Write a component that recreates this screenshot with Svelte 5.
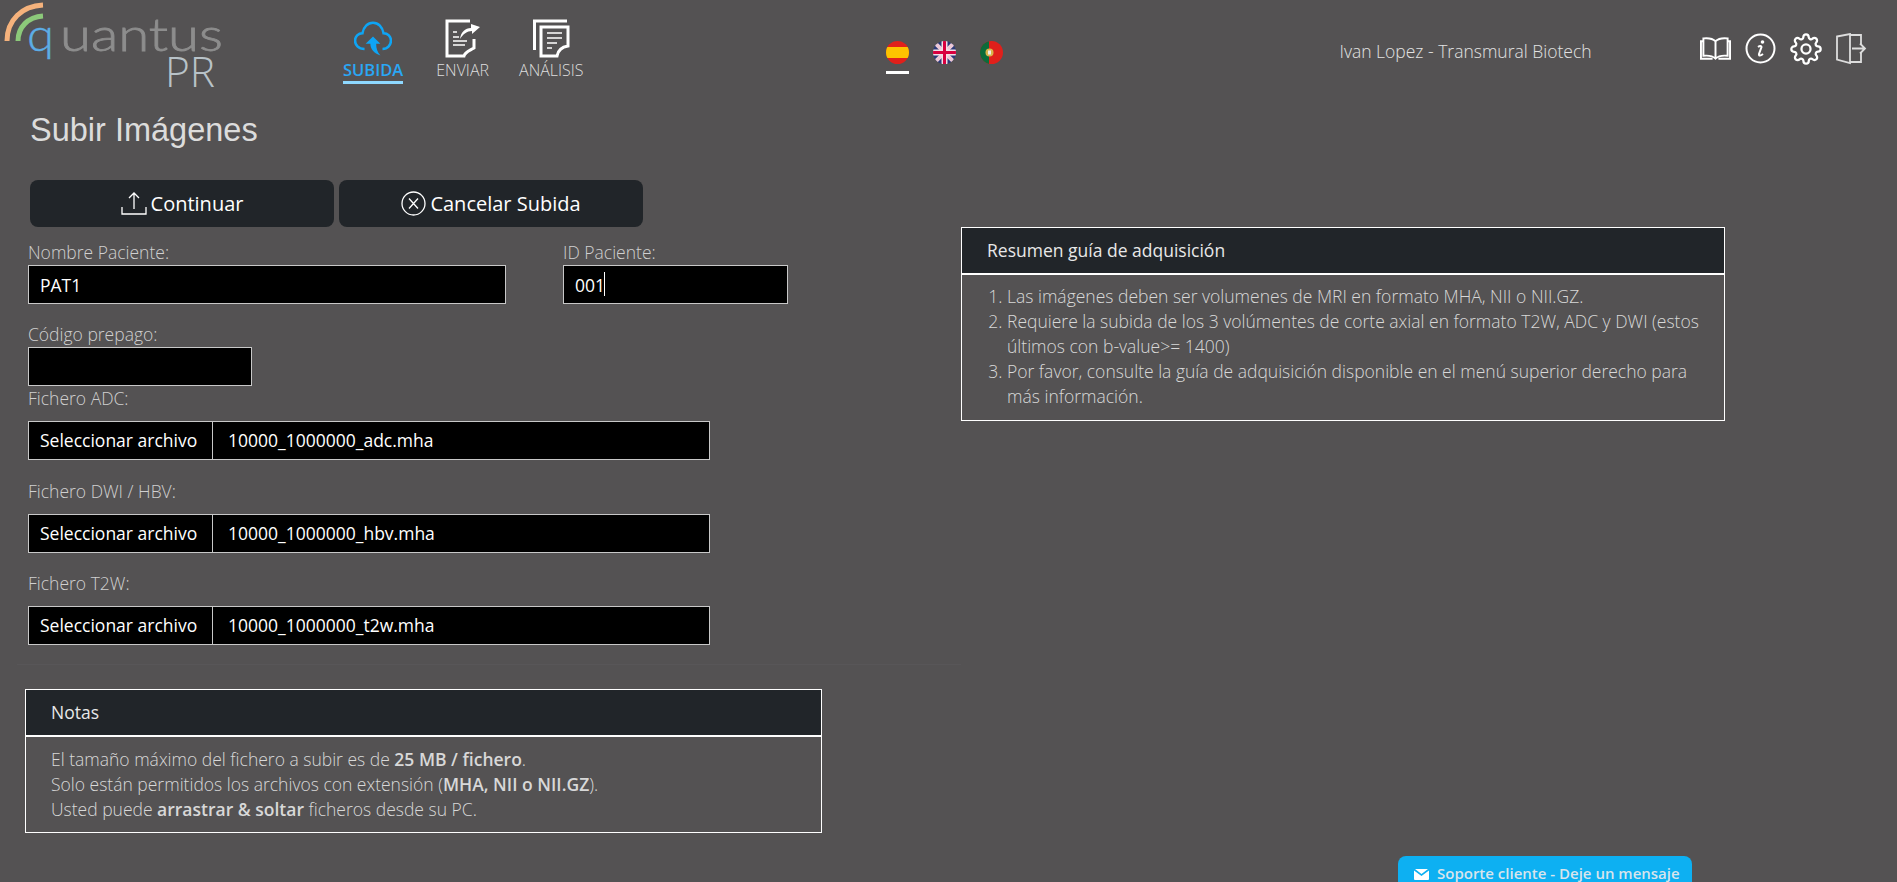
<script>
    let fileFields = [
        { label: 'Fichero ADC:', name: '10000_1000000_adc.mha', cls: 'adc' },
        { label: 'Fichero DWI / HBV:', name: '10000_1000000_hbv.mha', cls: 'hbv' },
        { label: 'Fichero T2W:', name: '10000_1000000_t2w.mha', cls: 't2w' }
    ];
    const gear = "M19.4 15a1.65 1.65 0 0 0 .33 1.82l.06.06a2 2 0 0 1 0 2.83 2 2 0 0 1-2.83 0l-.06-.06a1.65 1.65 0 0 0-1.82-.33 1.65 1.65 0 0 0-1 1.51V21a2 2 0 0 1-2 2 2 2 0 0 1-2-2v-.09A1.65 1.65 0 0 0 9 19.4a1.65 1.65 0 0 0-1.82.33l-.06.06a2 2 0 0 1-2.83 0 2 2 0 0 1 0-2.83l.06-.06a1.65 1.65 0 0 0 .33-1.82 1.65 1.65 0 0 0-1.51-1H3a2 2 0 0 1-2-2 2 2 0 0 1 2-2h.09A1.65 1.65 0 0 0 4.6 9a1.65 1.65 0 0 0-.33-1.82l-.06-.06a2 2 0 0 1 0-2.83 2 2 0 0 1 2.83 0l.06.06a1.65 1.65 0 0 0 1.82.33H9a1.65 1.65 0 0 0 1-1.51V3a2 2 0 0 1 2-2 2 2 0 0 1 2 2v.09a1.65 1.65 0 0 0 1 1.51 1.65 1.65 0 0 0 1.82-.33l.06-.06a2 2 0 0 1 2.83 0 2 2 0 0 1 0 2.83l-.06.06a1.65 1.65 0 0 0-.33 1.82V9a1.65 1.65 0 0 0 1.51 1H21a2 2 0 0 1 2 2 2 2 0 0 1-2 2h-.09a1.65 1.65 0 0 0-1.51 1z";
</script>

<div class="page">
    <header class="topbar">
        <svg class="logo" width="230" height="90" viewBox="0 0 230 90">
            <path d="M7 41 C7 20 22 6 43 5" fill="none" stroke="#f5b27c" stroke-width="5"/>
            <path d="M18 41 C18 27 28 17 43 16" fill="none" stroke="#8cc97a" stroke-width="5"/>
            <text class="logo-q" x="27" y="51" textLength="27" lengthAdjust="spacingAndGlyphs">q</text>
            <text class="logo-rest" x="60" y="51" textLength="163" lengthAdjust="spacingAndGlyphs">uantus</text>
            <text class="logo-pr" x="165" y="87" textLength="50" lengthAdjust="spacingAndGlyphs">PR</text>
        </svg>

        <nav class="mainnav">
            <div class="navitem active">
                <svg width="38" height="34" viewBox="0 0 36 32">
                    <path d="M10 26 C4 26 1 22 1 18 C1 14 4 11 8 11 C9 5 13 1 18 1 C23 1 27 5 28 11 C32 11 35 14 35 18 C35 22 32 26 27 26" fill="none" stroke="#0ea5f5" stroke-width="2.4"/>
                    <path d="M18 14 L25 21 L21 21 C21 25 22 29 25 32 C19 30 15.500 26 15.500 21 L11 21 Z" fill="#0ea5f5"/>
                </svg>
                <span>SUBIDA</span>
            </div>
            <div class="navitem enviar">
                <svg width="35" height="39" viewBox="0 0 35 39">
                    <path d="M25 2 H2 V37 H19 C20 33 24 32 29 29 V20" fill="none" stroke="#fff" stroke-width="3"/>
                    <path d="M15 20 C16 13 20 9 26 9 V5 L35 8 L27 15 V12 C22 12 18 15 15 20 Z" fill="#fff"/>
                    <path d="M8 13 H12 M8 18 H14 M8 22 H22 M8 26 H20" fill="none" stroke="#fff" stroke-width="1.400"/>
                </svg>
                <span>ENVIAR</span>
            </div>
            <div class="navitem analisis">
                <svg width="37" height="39" viewBox="0 0 37 39">
                    <path d="M1.500 31 V2 H34" fill="none" stroke="#fff" stroke-width="3"/>
                    <path d="M8 8 H35 V27 C29 28 25 31 24 37 H8 Z" fill="none" stroke="#fff" stroke-width="3"/>
                    <path d="M14 14 H29 M14 19 H29 M14 24 H24 M14 29 H19" fill="none" stroke="#fff" stroke-width="1.400"/>
                </svg>
                <span>ANÁLISIS</span>
            </div>
        </nav>

        <div class="flags">
            <div class="flag selected">
                <svg width="23" height="23" viewBox="0 0 23 23">
                    <clipPath id="esclip"><circle cx="11.500" cy="11.500" r="11.500"/></clipPath>
                    <g clip-path="url(#esclip)">
                        <rect width="23" height="23" fill="#e0201b"/>
                        <rect x="0" y="6" width="23" height="11" fill="#fdc300"/>
                    </g>
                </svg>
            </div>
            <div class="flag">
                <svg width="23" height="23" viewBox="0 0 23 23">
                    <clipPath id="ukclip"><circle cx="11.500" cy="11.500" r="11.500"/></clipPath>
                    <g clip-path="url(#ukclip)">
                        <rect width="23" height="23" fill="#2a3a78"/>
                        <path d="M0 0 L23 23 M23 0 L0 23" stroke="#ecc8d6" stroke-width="4"/>
                        <path d="M11.500 0 V23 M0 11.500 H23" stroke="#f2dfe6" stroke-width="6"/>
                        <path d="M11.500 0 V23 M0 11.500 H23" stroke="#d8003f" stroke-width="3"/>
                    </g>
                </svg>
            </div>
            <div class="flag">
                <svg width="23" height="23" viewBox="0 0 23 23">
                    <clipPath id="ptclip"><circle cx="11.500" cy="11.500" r="11.500"/></clipPath>
                    <g clip-path="url(#ptclip)">
                        <rect width="23" height="23" fill="#e0201b"/>
                        <rect width="9" height="23" fill="#0c6b3a"/>
                        <circle cx="9.500" cy="11.500" r="4" fill="#d9b44a"/>
                        <rect x="8" y="9.500" width="3" height="4" fill="#eee"/>
                    </g>
                </svg>
            </div>
        </div>

        <div class="username">Ivan Lopez - Transmural Biotech</div>

        <div class="tools">
            <svg width="31" height="26" viewBox="0 0 32 26">
                <path d="M16 5 C13 2 8 1.500 3.500 2 V20 C8 19.500 13 20 16 23 C19 20 24 19.500 28.500 20 V2 C24 1.500 19 2 16 5 Z M16 5 V23" fill="none" stroke="#fff" stroke-width="2"/>
                <path d="M3.500 5 H1 V23 H13 M28.500 5 H31 V23 H19" fill="none" stroke="#fff" stroke-width="2"/>
            </svg>
            <svg width="31" height="31" viewBox="0 0 31 31">
                <circle cx="15.500" cy="15.500" r="14" fill="none" stroke="#fff" stroke-width="2"/>
                <circle cx="17.500" cy="9" r="1.800" fill="#fff"/>
                <path d="M13 14 C14.500 13 16.500 12.500 16.500 14 L14 21 C13.600 23 15.500 23 18 21" fill="none" stroke="#fff" stroke-width="2"/>
            </svg>
            <svg width="32" height="32" viewBox="0 0 24 24">
                <path d={gear} fill="none" stroke="#fff" stroke-width="1.700"/>
                <circle cx="12" cy="12" r="3.400" fill="none" stroke="#fff" stroke-width="1.700"/>
            </svg>
            <svg width="31" height="32" viewBox="0 0 31 32">
                <path d="M1 3.500 L14 1 V30 L1 26.500 Z" fill="none" stroke="#ddd" stroke-width="1.800"/>
                <path d="M14 2 H25 V11 M25 20 V29 H14" fill="none" stroke="#ddd" stroke-width="1.800"/>
                <path d="M16 15.500 H29 M24 10.500 L29 15.500 L24 20.500" fill="none" stroke="#ddd" stroke-width="1.800"/>
            </svg>
        </div>
    </header>

    <main class="content">
        <section class="left">
            <h1>Subir Imágenes</h1>

            <div class="actions">
                <button type="button">
                    <svg width="26" height="25" viewBox="0 0 26 25">
                        <path d="M13 2 V18 M8 7 L13 2 L18 7 M1 16 V23 H25 V16" fill="none" stroke="#fff" stroke-width="1.300"/>
                    </svg>
                    Continuar
                </button>
                <button type="button">
                    <svg width="25" height="25" viewBox="0 0 25 25">
                        <circle cx="12.500" cy="12.500" r="11.500" fill="none" stroke="#fff" stroke-width="1.300"/>
                        <path d="M8 7.500 L17 17.500 M17 7.500 L8 17.500" fill="none" stroke="#fff" stroke-width="1.300"/>
                    </svg>
                    Cancelar Subida
                </button>
            </div>

            <div class="form">
                <div class="row">
                    <div class="field name">
                        <label for="pname">Nombre Paciente:</label>
                        <input id="pname" value="PAT1" />
                    </div>
                    <div class="field pid">
                        <label for="pid">ID Paciente:</label>
                        <div class="caretwrap">
                            <input id="pid" value="001" />
                            <span class="caret"></span>
                        </div>
                    </div>
                </div>
                <div class="field code">
                    <label for="pcode">Código prepago:</label>
                    <input id="pcode" value="" />
                </div>
                {#each fileFields as f}
                    <div class="filegroup {f.cls}">
                        <div class="filelabel">{f.label}</div>
                        <div class="fileinput">
                            <span class="filebtn">Seleccionar archivo</span>
                            <span class="filename">{f.name}</span>
                        </div>
                    </div>
                {/each}
            </div>

            <hr />

            <div class="panel notes">
                <div class="panel-head">Notas</div>
                <div class="panel-body">
                    El tamaño máximo del fichero a subir es de <b>25 MB / fichero</b>.<br />
                    Solo están permitidos los archivos con extensión (<b>MHA, NII o NII.GZ</b>).<br />
                    Usted puede <b>arrastrar &amp; soltar</b> ficheros desde su PC.
                </div>
            </div>
        </section>

        <aside class="panel guide">
            <div class="panel-head">Resumen guía de adquisición</div>
            <ol class="panel-body">
                <li>Las imágenes deben ser volumenes de MRI en formato MHA, NII o NII.GZ.</li>
                <li>Requiere la subida de los 3 volúmentes de corte axial en formato T2W, ADC y DWI (estos últimos con b-value&gt;= 1400)</li>
                <li>Por favor, consulte la guía de adquisición disponible en el menú superior derecho para más información.</li>
            </ol>
        </aside>
    </main>

    <div class="support">
        <svg width="15" height="11" viewBox="0 0 15 11">
            <path d="M1 0 H14 L7.500 5 Z M0 1.500 L7.500 7 L15 1.500 V10 a1 1 0 0 1 -1 1 H1 a1 1 0 0 1 -1 -1 Z" fill="#fff"/>
        </svg>
        Soporte cliente - Deje un mensaje
    </div>
</div>

<style>
    :global(body) {
        margin: 0;
        background: #545253;
    }
    .page {
        height: 882px;
        overflow: hidden;
        position: relative;
        font-family: "Open Sans", "Liberation Sans", sans-serif;
        font-size: 17.5px;
        font-weight: 300;
        line-height: 25px;
        color: #e2e2e2;
    }
    .topbar {
        display: flex;
        height: 90px;
    }
    .logo {
        flex: none;
        overflow: visible;
    }
    .logo-q {
        font-family: Lato, sans-serif;
        font-weight: 300;
        font-size: 46px;
        fill: #5cade6;
        stroke: #5cade6;
        stroke-width: 0.4;
    }
    .logo-rest {
        font-family: Lato, sans-serif;
        font-weight: 300;
        font-size: 46px;
        fill: #8d8d8d;
        stroke: #8d8d8d;
        stroke-width: 0.8;
    }
    .logo-pr {
        font-family: "Open Sans", sans-serif;
        font-weight: 300;
        font-size: 42px;
        fill: #b8c2c8;
    }
    .mainnav {
        display: flex;
        margin-left: 113px;
        gap: 30px;
        padding-top: 19px;
    }
    .navitem {
        display: flex;
        flex-direction: column;
        align-items: center;
        font-size: 16px;
        height: 62px;
        line-height: 20px;
        color: #dddddd;
    }
    .navitem svg {
        height: 39px;
        margin-bottom: 2px;
    }
    .navitem.active {
        font-size: 16.5px;
        font-weight: 600;
        color: #2aa7f5;
        border-bottom: 3px solid #8ed8ff;
    }
    .enviar {
        margin-left: 3px;
    }
    .flags {
        display: flex;
        gap: 24px;
        margin-left: 302px;
        padding-top: 41px;
    }
    .flag {
        width: 23px;
        height: 30px;
    }
    .flag svg {
        display: block;
    }
    .flag.selected {
        border-bottom: 3px solid #fff;
    }
    .username {
        margin-left: 337px;
        padding-top: 39px;
        width: 250px;
        white-space: nowrap;
    }
    .tools {
        display: flex;
        align-items: center;
        gap: 14px;
        height: 63px;
        padding-top: 17px;
        margin-left: 110px;
    }
    .tools svg {
        flex: none;
    }
    .content {
        display: flex;
    }
    .left {
        width: 961px;
        flex: none;
    }
    h1 {
        margin: 0;
        padding-left: 30px;
        font-family: "Liberation Sans", Arial, sans-serif;
        font-size: 32.5px;
        font-weight: 400;
        line-height: 40px;
        color: #dcdcdc;
        height: 90px;
        padding-top: 20px;
        box-sizing: border-box;
    }
    .actions {
        display: flex;
        gap: 5px;
        padding-left: 30px;
    }
    .actions button {
        width: 304px;
        height: 47px;
        display: flex;
        align-items: center;
        justify-content: center;
        gap: 4px;
        background: #212529;
        border: 0;
        border-radius: 8px;
        color: #fff;
        font-family: "Open Sans", sans-serif;
        font-size: 20px;
        font-weight: 400;
    }
    .form {
        padding-left: 28px;
        padding-top: 13px;
    }
    .row {
        display: flex;
        gap: 57px;
    }
    .field label {
        display: block;
        line-height: 25px;
        color: #d0d0d0;
    }
    .field input {
        display: block;
        width: 100%;
        height: 39px;
        box-sizing: border-box;
        padding: 0 11px;
        background: #000;
        border: 1px solid #c8c8c8;
        border-radius: 0;
        color: #fff;
        font-family: "Open Sans", sans-serif;
        font-size: 17.5px;
        font-weight: 400;
        outline: none;
    }
    .name {
        width: 478px;
    }
    .pid {
        width: 225px;
    }
    .caretwrap {
        position: relative;
    }
    .caret {
        position: absolute;
        left: 41px;
        top: 7px;
        width: 1px;
        height: 24px;
        background: #fff;
    }
    .code {
        width: 224px;
        margin-top: 18px;
    }
    .filegroup {
        margin-bottom: 18.5px;
    }
    .filelabel {
        line-height: 25px;
        color: #d0d0d0;
        margin-bottom: 10px;
    }
    .fileinput {
        display: flex;
        width: 682px;
        height: 39px;
        box-sizing: border-box;
        background: #000;
        border: 1px solid #c8c8c8;
        color: #fff;
        font-weight: 400;
        line-height: 37px;
    }
    .filebtn {
        width: 184px;
        box-sizing: border-box;
        padding-left: 11px;
        border-right: 1px solid #c8c8c8;
        white-space: nowrap;
    }
    .filename {
        padding-left: 15px;
    }
    hr {
        margin: 17.5px 0 0 17px;
        border: 0;
        border-top: 1px solid #585658;
    }
    .panel {
        box-sizing: border-box;
        border: 1px solid #fff;
    }
    .panel-head {
        background: #212529;
        color: #e8e8e8;
        font-weight: 400;
        height: 47px;
        line-height: 45px;
        padding-left: 25px;
        border-bottom: 2px solid #fff;
        box-sizing: border-box;
    }
    .panel-body {
        margin: 0;
        padding: 10px 25px;
        color: #d8d8d8;
    }
    .panel-body b {
        font-weight: 600;
    }
    .notes {
        margin: 24px 0 0 25px;
        width: 797px;
        height: 144px;
    }
    .guide {
        width: 764px;
        height: 194px;
        margin-top: 137px;
    }
    ol.panel-body {
        padding: 9px 25px 0 45px;
    }
    .support {
        position: absolute;
        left: 1398px;
        top: 856px;
        width: 294px;
        height: 40px;
        box-sizing: border-box;
        padding: 7px 0 0 16px;
        display: flex;
        align-items: flex-start;
        gap: 8px;
        background: #0db0f2;
        border-radius: 8px 8px 0 0;
        color: #d8e4ec;
        font-size: 15px;
        font-weight: 600;
        line-height: 20px;
        white-space: nowrap;
    }
    .support svg {
        margin-top: 6px;
    }
</style>
